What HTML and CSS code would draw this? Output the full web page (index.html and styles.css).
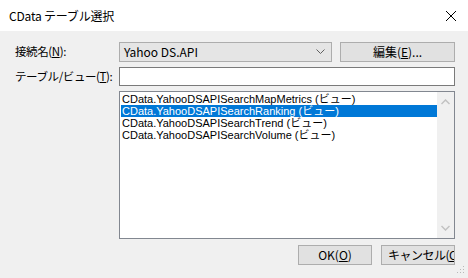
FILE: index.html
```html
<!DOCTYPE html>
<html lang="ja">
<head>
  <meta charset="UTF-8" />
  <title>CData テーブル選択</title>
  <link rel="stylesheet" href="styles.css">
</head>
<body>
  <div class="dialog">
    <div class="titlebar">
      <span class="title">CData テーブル選択</span>
      <svg class="close" width="12" height="12" viewBox="0 0 12 12">
        <path d="M1 1 L11 11 M11 1 L1 11" stroke="#000" stroke-width="1" fill="none"/>
      </svg>
    </div>

    <div class="content">
      <div class="row">
        <label class="label">接続名(<u>N</u>):</label>
        <div class="combo">
          <span>Yahoo DS.API</span>
          <svg width="9" height="6" viewBox="0 0 9 6">
            <path d="M0.5 0.5 L4.5 4.5 L8.5 0.5" stroke="#606060" stroke-width="1" fill="none"/>
          </svg>
        </div>
        <button class="btn edit">編集(<u>E</u>)...</button>
      </div>

      <div class="row">
        <label class="label">テーブル/ビュー(<u>T</u>):</label>
        <input class="text" type="text">
      </div>

      <div class="row">
        <span class="label"></span>
        <div class="listbox">
          <ul class="items">
            <li>CData.YahooDSAPISearchMapMetrics (ビュー)</li>
            <li class="selected">CData.YahooDSAPISearchRanking (ビュー)</li>
            <li>CData.YahooDSAPISearchTrend (ビュー)</li>
            <li>CData.YahooDSAPISearchVolume (ビュー)</li>
          </ul>
          <div class="scrollbar">
            <svg width="9" height="6" viewBox="0 0 9 6">
              <path d="M0.5 5 L4.5 1 L8.5 5" stroke="#c2c2c2" stroke-width="1.5" fill="none"/>
            </svg>
            <svg width="9" height="6" viewBox="0 0 9 6">
              <path d="M0.5 1 L4.5 5 L8.5 1" stroke="#c2c2c2" stroke-width="1.5" fill="none"/>
            </svg>
          </div>
        </div>
      </div>

      <div class="buttons">
        <button class="btn">OK(<u>O</u>)</button>
        <button class="btn cancel">キャンセル(<u>C</u></button>
      </div>
    </div>

    <svg class="grip" width="8" height="8" viewBox="0 0 8 8">
      <rect x="6" y="0" width="1" height="1" fill="#b8b8b8"/>
      <rect x="3" y="3" width="1" height="1" fill="#b8b8b8"/>
      <rect x="6" y="3" width="1" height="1" fill="#b8b8b8"/>
      <rect x="0" y="6" width="1" height="1" fill="#b8b8b8"/>
      <rect x="3" y="6" width="1" height="1" fill="#b8b8b8"/>
      <rect x="6" y="6" width="1" height="1" fill="#b8b8b8"/>
    </svg>
  </div>
</body>
</html>
```

FILE: styles.css
```css
body {
  margin: 0;
  background: #f0f0f0;
  font-family: "Noto Sans CJK JP", "Noto Sans", sans-serif;
  font-size: 12px;
  color: #000;
}

.dialog {
  position: relative;
  width: 468px;
  height: 278px;
  overflow: hidden;
  background: #f0f0f0;
}

.titlebar {
  height: 31px;
  background: #fff;
  display: flex;
  align-items: center;
  justify-content: space-between;
  padding: 0 11px 0 9px;
}

.title {
  font-size: 12px;
  letter-spacing: -0.2px;
}

.content {
  padding: 11px 13px 0 15px;
  display: flex;
  flex-direction: column;
  gap: 5px;
}

.row {
  display: flex;
  align-items: center;
}

.label {
  width: 104px;
  flex: none;
  align-self: flex-start;
  line-height: 19px;
  white-space: nowrap;
  font-size: 11.5px;
  letter-spacing: -0.4px;
}

.combo {
  width: 213px;
  height: 20px;
  box-sizing: border-box;
  border: 1px solid #adadad;
  background: #e5e5e5;
  display: flex;
  align-items: center;
  justify-content: space-between;
  padding: 0 6px 0 4px;
  line-height: 18px;
}

.btn {
  font: inherit;
  font-size: 12px;
  line-height: 18px;
  height: 20px;
  box-sizing: border-box;
  border: 1px solid #adadad;
  background: #e1e1e1;
  padding: 0;
  color: #000;
}

.edit {
  width: 115px;
  margin-left: 8px;
}

.text {
  width: 336px;
  height: 19px;
  box-sizing: border-box;
  border: 1px solid #7a7a7a;
  background: #fff;
  margin: 0;
  padding: 0;
}

.listbox {
  width: 336px;
  height: 148px;
  box-sizing: border-box;
  border: 1px solid #828790;
  background: #fff;
  display: flex;
}

.items {
  list-style: none;
  margin: 0;
  padding: 1px 0 0 1px;
  flex: 1;
  font-family: "Liberation Sans", "Noto Sans CJK JP", sans-serif;
  font-size: 11px;
}

.items li {
  height: 12px;
  line-height: 12px;
  padding-left: 1px;
  white-space: nowrap;
}

.items li.selected {
  background: #0078d7;
  color: #fff;
}

.scrollbar {
  width: 17px;
  background: #f0f0f0;
  display: flex;
  flex-direction: column;
  justify-content: space-between;
  align-items: center;
  padding: 7px 0 7px;
}

.buttons {
  display: flex;
  justify-content: flex-end;
  gap: 9px;
  margin-top: 1px;
}

.buttons .btn {
  width: 74px;
}

.cancel {
  white-space: nowrap;
  overflow: hidden;
  text-align: left;
  padding-left: 6px;
  letter-spacing: -0.5px;
}

.grip {
  position: absolute;
  right: 3px;
  bottom: 4px;
}
```
